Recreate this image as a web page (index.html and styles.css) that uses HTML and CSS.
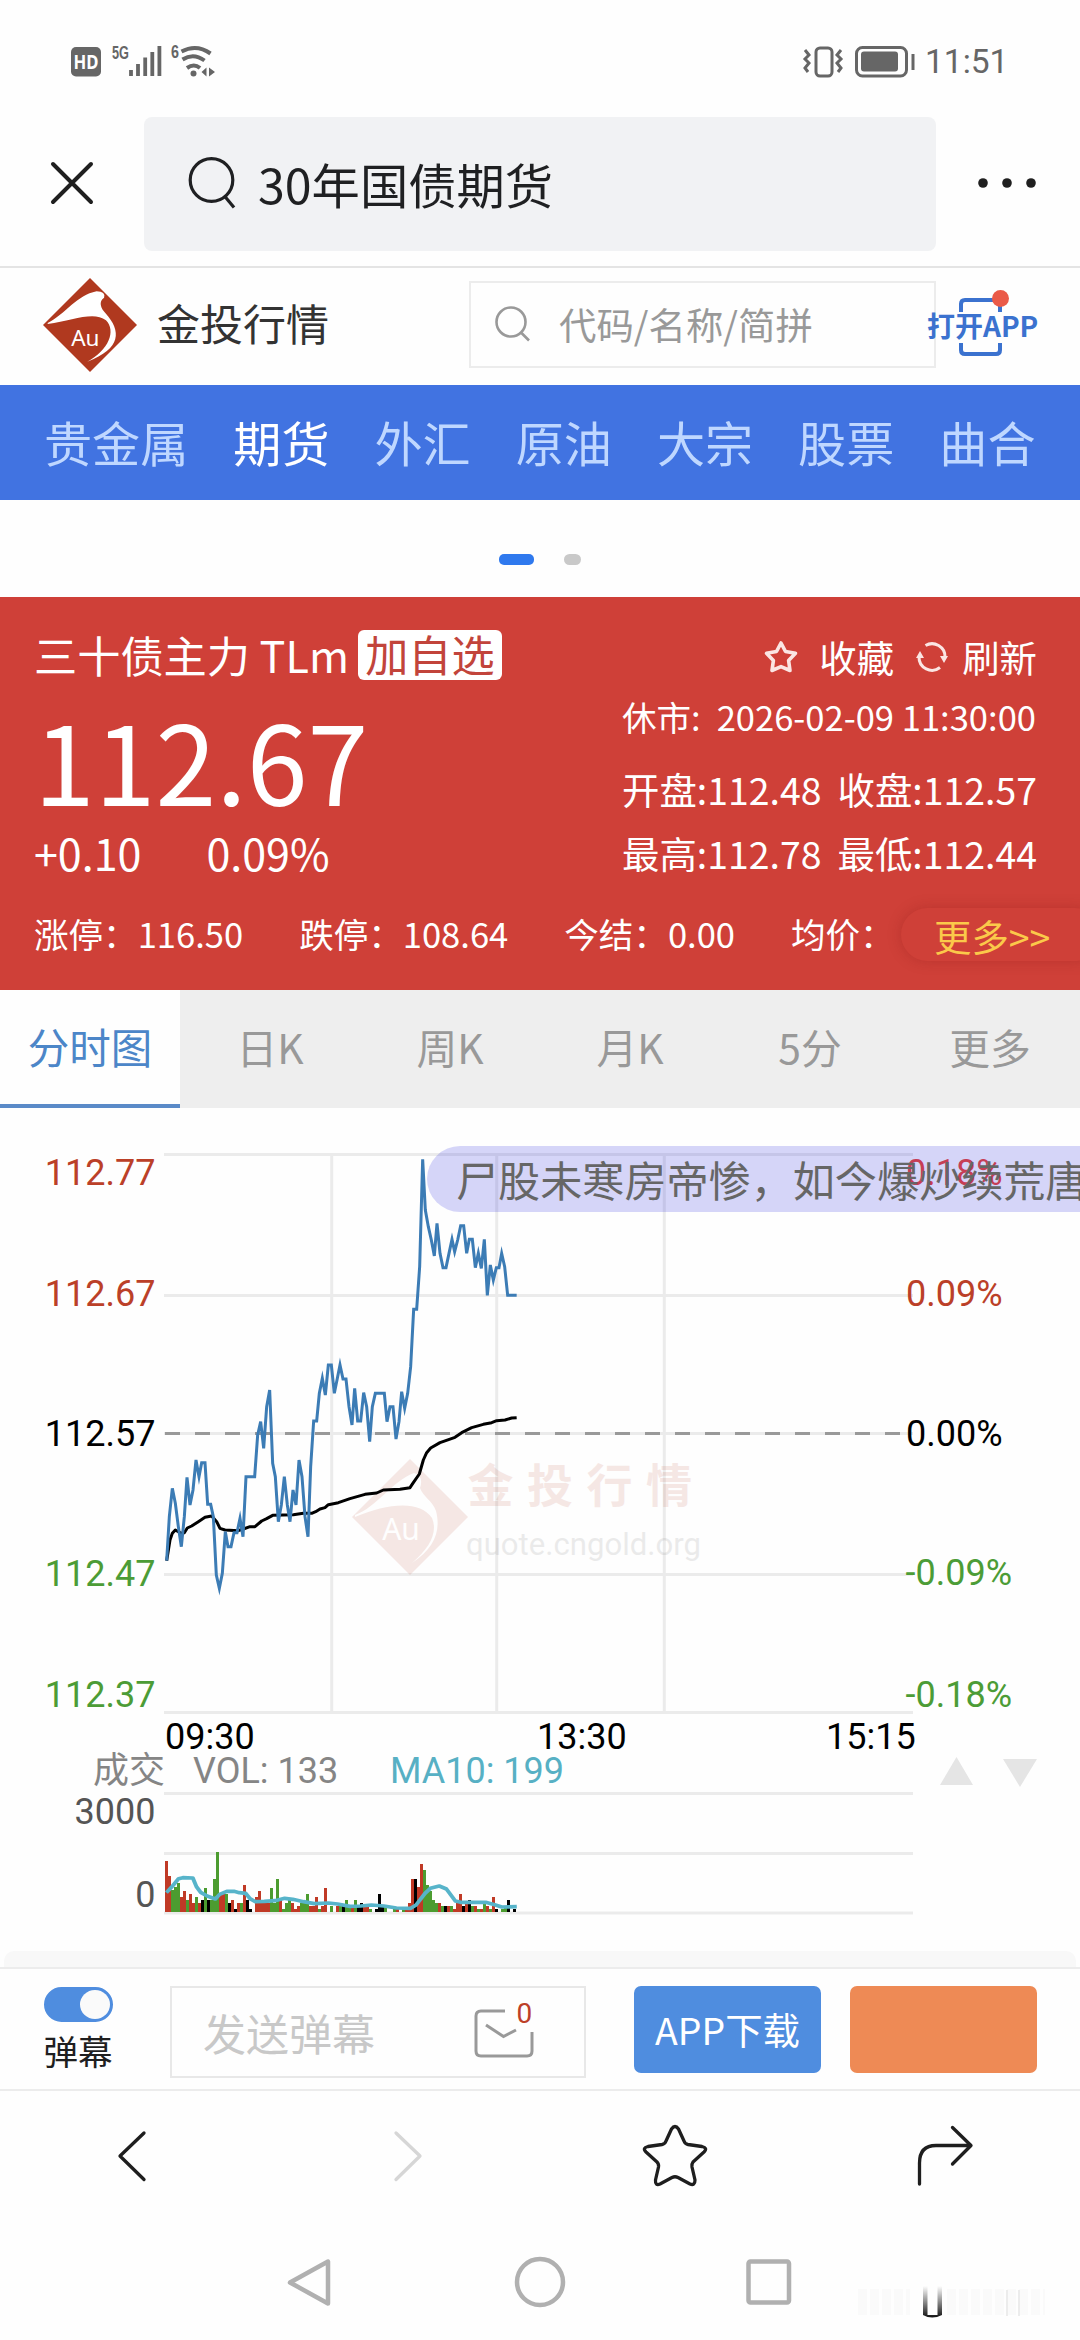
FILE: index.html
```html
<!DOCTYPE html>
<html lang="zh-CN">
<head>
<meta charset="utf-8">
<title>30年国债期货</title>
<link rel="stylesheet" href="styles.css">
</head>
<body>
<header class="status">
  <svg class="status-left" width="146" height="36" viewBox="70 43 146 36">
    <rect x="71" y="47" width="30" height="29.500" rx="5" fill="#666"/>
    <text x="86" y="69" class="hd" text-anchor="middle" textLength="25" lengthAdjust="spacingAndGlyphs">HD</text>
    <text x="112" y="59" class="net" textLength="17" lengthAdjust="spacingAndGlyphs">5G</text>
    <path d="M131 70v6M138 64v12M145.200 57.500v18.500M152.300 52v24M159.400 46v30" stroke="#666" stroke-width="3.800"/>
    <text x="171" y="58" class="net" textLength="8" lengthAdjust="spacingAndGlyphs">6</text>
    <g fill="none" stroke="#666" stroke-width="4">
      <path d="M181.500 51.500q15-8 29 2M182.500 59.500q11-7 22 1M187 68q7-5 13 0"/>
    </g>
    <circle cx="193.500" cy="73.500" r="3" fill="#666"/>
    <path d="M206.500 67.500v9l-5-4.500zM209 67.500v9l6-4.500z" fill="#666"/>
  </svg>
  <svg class="status-right" width="116" height="36" viewBox="802 43 116 36">
    <g fill="none" stroke="#666" stroke-width="3">
      <rect x="816" y="48" width="16" height="28" rx="4"/>
      <path d="M805 50l4 5-4 4 4 4-4 5 3 4M841 50l-4 5 4 4-4 4 4 5-3 4"/>
      <rect x="856.500" y="47.500" width="50" height="28.500" rx="6"/>
      <path d="M913 54v16"/>
    </g>
    <rect x="861" y="51.500" width="37" height="20" rx="3" fill="#666"/>
  </svg>
  <span class="clock">11:51</span>
</header>
<div class="browser-bar">
  <svg class="close" width="46" height="46" viewBox="0 0 46 46"><path d="M4 4L42 42M42 4L4 42" stroke="#1f1f1f" stroke-width="4" stroke-linecap="round"/></svg>
  <div class="query">
    <svg width="48" height="54" viewBox="0 0 48 54" fill="none" stroke="#1f2022" stroke-width="3.200"><circle cx="23.500" cy="24" r="21.300"/><path d="M36.500 40L46 51.500"/></svg>
    <span>30年国债期货</span>
  </div>
  <svg class="dots" width="60" height="12" viewBox="0 0 60 12" fill="#1f1f1f"><circle cx="6" cy="6" r="4.800"/><circle cx="30" cy="6" r="4.800"/><circle cx="54" cy="6" r="4.800"/></svg>
</div>
<div class="site-head">
  <svg class="logo" width="94" height="94" viewBox="0 0 100 100">
    <path d="M50 0L100 50L50 100L0 50z" fill="#b0391f"/>
    <path d="M5 48C24 38 36 18 57 14Q67 14 65 21C59 25 61 32 67 38C83 56 84 75 47 89C70 77 78 56 67 45C54 35 32 45 5 49z" fill="#fff"/>
    <text x="45" y="72" text-anchor="middle" class="au">Au</text>
  </svg>
  <h1>金投行情</h1>
  <div class="code-search">
    <svg width="38" height="40" viewBox="0 0 38 40" fill="none" stroke="#999" stroke-width="2.600"><circle cx="17" cy="17" r="14.500"/><path d="M27.500 28L35 35.500"/></svg>
    <span>代码/名称/简拼</span>
  </div>
  <div class="open-app">
    <svg width="50" height="68" viewBox="0 0 50 68" fill="none" stroke="#3b72cf" stroke-width="4"><path d="M5 22V14Q5 10 9 10H40Q44 10 44 14V22M5 53V60Q5 64 9 64H40Q44 64 44 60V53"/><circle cx="44.500" cy="8.500" r="8.500" fill="#ea5a48" stroke="none"/></svg>
    <b>打开APP</b>
  </div>
</div>
<nav class="cats"><a>贵金属</a><a class="on">期货</a><a>外汇</a><a>原油</a><a>大宗</a><a>股票</a><a>曲合</a></nav>
<div class="pager"><i class="cur"></i><i></i></div>
<section class="quote">
  <div class="quote-main">
    <div class="left">
      <div class="name"><span>三十债主力 TLm</span><span class="add">加自选</span></div>
      <div class="price">112.67</div>
      <div class="chg"><span>+0.10</span><span>0.09%</span></div>
    </div>
    <div class="right">
      <div class="acts">
        <svg class="fav" width="36" height="36" viewBox="0 0 36 36"><path d="M18 4L22.500 12.500L32.500 14.300L25.600 21.500L27 31.500L18 27.600L9 31.500L10.400 21.500L3.500 14.300L13.500 12.500z" fill="none" stroke="#fbe5e3" stroke-width="3.600" stroke-linejoin="round"/></svg>
        <span>收藏</span>
        <svg class="rel" width="32" height="30" viewBox="0 0 32 30"><g fill="none" stroke="#fbe5e3" stroke-width="3"><path d="M9.500 3.500A13 13 0 0 1 29 15M24 25.500A13 13 0 0 1 3 15"/></g><path d="M24 14h8l-4 7zM0 16h8l-4-7z" fill="#fbe5e3"/></svg>
        <span>刷新</span>
      </div>
      <div class="time"><span>休市:</span><span>2026-02-09 11:30:00</span></div>
      <div class="pair p1"><span>开盘:112.48</span><span>收盘:112.57</span></div>
      <div class="pair"><span>最高:112.78</span><span>最低:112.44</span></div>
    </div>
  </div>
  <div class="extra"><span>涨停：116.50</span><span>跌停：108.64</span><span>今结：0.00</span><span>均价：</span><a class="more">更多&gt;&gt;</a></div>
</section>
<nav class="tabs"><a class="on">分时图</a><a>日K</a><a>周K</a><a>月K</a><a>5分</a><a>更多</a></nav>
<section class="chart">
  <svg width="1080" height="843" viewBox="0 1108 1080 843">
    <path class="grid" d="M164 1154.500H913M164 1295.500H913M164 1433.500H913M164 1574.500H913M164 1712.500H913M331.700 1154V1712M496.700 1154V1712M664.300 1154V1712M164 1793.500H913M164 1853.500H913M164 1913H913"/>
    <g class="mark">
      <path fill="#b4371c" d="M410 1459L468 1517L410 1575L352 1517z"/>
      <path fill="#fff" d="M355 1515C377 1507 391 1482 414 1473Q424 1476 420 1488C424 1498 432 1500 436 1511C441 1530 435 1548 412 1563C430 1548 438 1532 432 1518C420 1500 388 1503 355 1517z"/>
      <text x="401" y="1540" text-anchor="middle" class="mark-au">Au</text>
      <text x="467.500" y="1502" class="mark-cn">金投行情</text>
      <text x="466" y="1555" class="mark-en" textLength="235" lengthAdjust="spacingAndGlyphs">quote.cngold.org</text>
    </g>
    <path class="base" d="M165 1433.500H906"/>
    <g transform="translate(150 1140) scale(.33333)" fill="none">
      <polyline class="avg" points="50,1262 60,1200 67,1180 76,1170 94,1180 103,1178 112,1164 125,1158 145,1145 165,1132 185,1128 200,1145 210,1165 225,1170 265,1172 280,1167 300,1160 315,1160 335,1143 350,1136 368,1126 430,1124 460,1120 485,1120 497,1115 510,1107 525,1103 535,1094 565,1088 600,1076 645,1063 680,1059 700,1050 750,1048 780,1043 790,1028 808,1002 820,960 830,938 842,924 870,908 915,892 935,878 965,863 1000,853 1025,848 1040,842 1065,840 1085,834 1100,833"/>
      <polyline class="line" points="50,1262 58,1130 67,1045 76,1090 85,1160 94,1220 103,1130 111,1012 120,1095 129,1050 138,960 147,1010 155,968 165,968 173,1093 182,1093 190,1130 199,1305 208,1345 217,1300 226,1175 234,1220 243,1220 252,1178 261,1178 270,1135 279,1190 288,1010 314,1010 323,885 332,845 341,925 350,800 359,750 368,970 376,1010 385,1145 394,1095 403,1010 412,1095 420,1145 429,1050 438,1095 447,960 456,1010 465,1130 474,1190 482,980 491,843 500,843 508,760 517,715 526,765 535,675 544,675 553,760 561,720 570,675 579,717 588,717 597,800 606,855 614,745 623,843 632,843 641,758 650,800 659,905 667,800 676,760 703,760 711,845 720,800 729,800 738,897 747,845 755,755 764,805 773,760 782,680 791,508 800,508 809,380 818,58 826,210 835,260 844,300 853,348 861,250 870,340 879,383 888,383 897,340 906,298 914,335 923,300 932,257 941,257 950,340 958,298 967,298 976,383 985,340 994,385 1003,298 1012,466 1021,375 1030,420 1039,383 1047,383 1055,340 1064,380 1073,466 1100,466"/>
    </g>
    <g id="volume"></g>
    <polyline class="ma" transform="translate(0 1700) scale(.35714 .33333)" points="466,578 480,562 500,536 512,533 540,534 550,560 562,577 580,588 603,597 615,583 635,574 655,574 670,578 688,580 700,596 715,605 740,604 770,602 797,595 820,598 850,605 880,611 920,609 945,612 980,619 1010,618 1040,615 1075,618 1110,624 1150,625 1165,615 1190,580 1205,565 1230,558 1250,567 1275,603 1290,607 1360,607 1385,614 1405,621 1447,620"/>
    <g class="lab" text-anchor="end">
      <text x="155.500" y="1184.500" class="up">112.77</text><text x="155.500" y="1306" class="up">112.67</text><text x="155.500" y="1446">112.57</text><text x="155.500" y="1585.500" class="down">112.47</text><text x="155.500" y="1706.500" class="down">112.37</text>
      <text x="155.500" y="1824" class="dim">3000</text><text x="155.500" y="1907" class="dim">0</text>
    </g>
    <g class="lab">
      <text x="906" y="1184.500" class="top">0.18%</text><text x="906" y="1306" class="up">0.09%</text><text x="906" y="1446">0.00%</text><text x="905.500" y="1585" class="down">-0.09%</text><text x="905.500" y="1706.500" class="down">-0.18%</text>
      <text x="165" y="1749">09:30</text><text x="537" y="1749">13:30</text><text x="826" y="1749">15:15</text>
      <text x="93" y="1783" class="vol">成交</text><text x="193" y="1782.500" class="vol">VOL: 133</text><text x="390" y="1782.500" class="ma10">MA10: 199</text>
    </g>
    <path fill="#e5e5e5" d="M940 1785L956.500 1757L973 1785zM1003 1759H1037L1020 1787z"/>
  </svg>
  <div class="danmaku">尸股未寒房帝惨，如今爆炒续荒唐</div>
</section>
<div class="sheet"></div>
<div class="tools">
  <div class="switch"><i></i><span>弹幕</span></div>
  <div class="send"><span>发送弹幕</span>
    <svg width="64" height="64" viewBox="0 0 64 64"><path d="M36 13H12Q7 13 7 18V53Q7 58 12 58H58Q63 58 63 53V34" fill="none" stroke="#999" stroke-width="3"/><path d="M17 27L34.500 38.500L47 32" fill="none" stroke="#999" stroke-width="3"/><text x="47.500" y="24.500" class="cnt">0</text></svg>
  </div>
  <a class="btn">APP下载</a><a class="btn alt"></a>
</div>
<nav class="browser-nav">
  <svg width="1080" height="139" viewBox="0 2091 1080 139" fill="none" stroke="#1e1e1e" stroke-width="3.300" stroke-linecap="round" stroke-linejoin="round">
    <path d="M144 2133L120 2156L144 2179.500"/>
    <path d="M396 2133L420 2156L396 2179.500" stroke="#d6d6d6"/>
    <path d="M671.500 2129Q675 2124 678.500 2129L684 2141Q685 2144 688 2144.500L702 2146.500Q708 2148 704 2152L693 2162Q691.500 2164 692 2167L695 2180Q695 2186 690 2184L678 2177.500Q675 2176 672 2177.500L660 2184Q655 2186 655.500 2180L658.500 2167Q659 2164 657 2162L646 2152Q642 2148 648 2146.500L662 2144.500Q665 2144 666 2141z"/>
    <path d="M919.500 2184V2163Q919.500 2145.500 936 2145.500H971M952.500 2127.500L971 2145.500L952.500 2164"/>
  </svg>
</nav>
<nav class="system-nav">
  <svg width="1080" height="110" viewBox="0 2230 1080 110" fill="none" stroke="#b0b0b0" stroke-width="4.500" stroke-linejoin="round">
    <path d="M328 2261.500V2303.500L290 2282.500z"/><circle cx="540" cy="2282" r="23"/><rect x="748.500" y="2261.500" width="40.500" height="41" rx="2"/>
    <defs><linearGradient id="fade" x1="0" y1="0" x2="0" y2="1"><stop offset="0" stop-color="#222" stop-opacity="0"/><stop offset="1" stop-color="#111"/></linearGradient></defs>
    <path d="M923 2286V2315Q932 2320 942 2315V2286H937.500V2315H927.500V2286z" fill="url(#fade)" stroke="none"/>
    <path d="M858 2302h52M947 2302h98" stroke="#fafafa" stroke-width="26" stroke-dasharray="9 3"/>
    <path d="M1007 2290v26M1019 2290v26" stroke="#ececec" stroke-width="2"/>
  </svg>
</nav>
<script src="script.js"></script>
</body>
</html>
```
FILE: styles.css
```css
* { box-sizing: border-box; }
body { margin: 0; width: 1080px; height: 2340px; overflow: hidden; background: #fefefe; font-family: "Noto Sans CJK SC", sans-serif; color: #333; display: flex; flex-direction: column; }
body > * { flex: none; }
svg { display: block; flex: none; overflow: visible; }
span, a, h1, b { white-space: nowrap; }
.status { height: 117px; padding: 43px 72px 0 70px; display: flex; align-items: flex-start; }
.status-right { margin-left: auto; }
.clock { margin-left: 7px; font: 33.500px/38px Roboto, sans-serif; color: #666; width: 83px; }
.hd { font: 700 20px "Noto Sans", sans-serif; fill: #fff; }
.net { font: 700 19px "Liberation Sans", sans-serif; fill: #666; }
.browser-bar { height: 151px; border-bottom: 2px solid #e4e4e4; display: flex; align-items: flex-start; padding-left: 49px; }
.close { margin-top: 43px; }
.query { margin-left: 49px; width: 792px; height: 134px; border-radius: 8px; background: #f1f2f4; display: flex; align-items: center; padding-left: 44px; }
.query svg { margin-top: -3px; }
.query span { margin: -2px 0 0 22px; font-size: 48.300px; color: #1f2022; line-height: 60px; }
.dots { margin: 60px 0 0 41px; }
.site-head { height: 117px; padding: 10px 42px 0 43px; display: flex; }
.au { font: 24px "Noto Sans", sans-serif; fill: #fff; }
h1 { margin: 14px 0 0 20px; font-size: 43px; font-weight: 400; line-height: 60px; width: 174px; }
.code-search { margin: 3px 0 0 138px; width: 467px; height: 87px; border: 2.500px solid #ececec; display: flex; align-items: center; padding-left: 23px; color: #999; font-size: 37.440px; line-height: 60px; }
.code-search span { margin: -1px 0 0 27px; }
.open-app { position: relative; width: 110px; margin-left: -9px; margin-top: 12px; display: flex; justify-content: center; }
.open-app svg { margin-left: -3px; }
.open-app b { position: absolute; left: 0; top: 15px; font-size: 28px; line-height: 40px; color: #3b72cf; }
.cats { height: 115px; background: #4173e1; display: flex; gap: 45px; padding-left: 44px; font-size: 48.100px; line-height: 113px; color: #bfd7ff; }
.cats .on { color: #fff; }
.pager { height: 97px; display: flex; justify-content: center; gap: 30px; padding-top: 54px; }
.pager i { width: 17px; height: 11px; border-radius: 6px; background: #c9c9c9; }
.pager .cur { width: 35px; background: #2f79ee; border-radius: 5px; }
.quote { height: 393px; background: #cf4038; color: #fff; overflow: hidden; }
.quote-main { display: flex; justify-content: space-between; height: 291px; padding: 0 43px 0 34px; }
.name { display: flex; margin-top: 33px; font-size: 43.200px; line-height: 49px; }
.add { margin-left: 9px; width: 144px; height: 50px; line-height: 47px; background: #fff; color: #c2443b; border-radius: 6px; text-align: center; }
.price { font-size: 109.500px; line-height: 120px; margin-top: 19px; }
.chg { display: flex; gap: 65px; font-size: 43px; line-height: 60px; margin-top: 3px; }
.right { display: flex; flex-direction: column; }
.acts { display: flex; justify-content: flex-end; align-items: center; font-size: 37.440px; line-height: 50px; margin-top: 35px; }
.fav { margin-right: 20px; }
.rel { margin: 0 14px 0 22px; }
.time { display: flex; justify-content: space-between; font-size: 34.560px; line-height: 50px; margin-top: 9px; width: 414px; }
.pair { display: flex; gap: 16px; justify-content: flex-end; font-size: 37.440px; line-height: 64px; }
.p1 { margin-top: 16px; }
.extra { position: relative; display: flex; gap: 56px; padding-left: 34px; font-size: 34.560px; line-height: 90px; }
.more { position: absolute; left: 901px; top: 20px; width: 200px; height: 53px; border-radius: 27px; line-height: 56px; padding-left: 33px; background: #cf4038; box-shadow: 0 0 14px rgba(130, 20, 20, .28); color: #fbc94a; font-size: 37.440px; }
.tabs { display: grid; grid-template-columns: repeat(6, 1fr); height: 118px; background: #eee; color: #999; text-align: center; font-size: 40.800px; line-height: 113px; }
.tabs .on { background: #fefefe; color: #4c86c8; border-bottom: 4px solid #5a8ac8; font-size: 41.500px; }
.chart { position: relative; height: 843px; overflow: hidden; }
.grid { stroke: #ebebeb; stroke-width: 3; }
.base { stroke: #999; stroke-width: 3; stroke-dasharray: 15 15; }
.avg { stroke: #000; stroke-width: 9; stroke-linejoin: round; }
.line { stroke: #3c7cb5; stroke-width: 9; stroke-miterlimit: 6; }
.ma { fill: none; stroke: #57b4ca; stroke-width: 11; stroke-linejoin: round; }
.mark { opacity: .11; }
.mark-au { font: 30px "Noto Sans", sans-serif; fill: #fff; }
.mark-cn { font: 700 46px "Noto Sans CJK SC", sans-serif; letter-spacing: 13.500px; fill: #b4371c; }
.mark-en { font: 31px Roboto, sans-serif; fill: #555; }
.lab { font: 36px Roboto, "Noto Sans CJK SC", sans-serif; fill: #000; }
.up { fill: #bb4028; }
.top { fill: #ec4a3c; }
.down { fill: #4c9c36; }
.dim { fill: #555; }
.vol { fill: #858585; }
.ma10 { fill: #57b0c4; }
.danmaku { position: absolute; left: 427px; top: 38px; height: 66px; width: 720px; border-radius: 33px; background: rgba(0, 0, 220, .16); color: #666; white-space: nowrap; font-size: 42.100px; line-height: 66px; padding-left: 29px; }
.sheet { height: 16px; margin: 0 4px; background: #f8f8f8; border-radius: 10px 10px 0 0; }
.tools { height: 124px; border-top: 2px solid #ececec; border-bottom: 2px solid #ececec; display: flex; padding: 17px 43px 0; }
.switch { width: 70px; margin-right: 57px; display: flex; flex-direction: column; align-items: center; }
.switch i { width: 69px; height: 35px; margin-top: 1px; border-radius: 18px; background: #4f8ddf; border: 3px solid #4f8ddf; display: flex; justify-content: flex-end; }
.switch i::after { content: ""; width: 30px; height: 29px; border-radius: 50%; background: #fafafa; }
.switch span { margin-top: 3px; font-size: 34.560px; line-height: 50px; color: #1f1f1f; }
.send { width: 416px; height: 92px; border: 2.500px solid #e8e8e8; padding: 0 51px 0 31px; display: flex; justify-content: space-between; color: #c8c8c8; font-size: 43px; line-height: 88px; }
.send svg { margin-top: 10px; }
.cnt { font: 28px Roboto, sans-serif; fill: #bd4028; }
.btn { margin-left: 48px; width: 187px; height: 87px; border-radius: 7px; background: #4f8ddf; color: #fff; text-align: center; font-size: 37.440px; line-height: 86px; }
.alt { margin-left: 29px; background: #ee8a55; }
.browser-nav { height: 139px; }
.system-nav { height: 110px; }
```
FILE: script.js
```js
// One bar per minute: colour code (r, g, k) and height in pixels, 0 leaves the minute empty.
const bars = "r51 r36 g22 g25 g29 r15 r21 g12 r18 r9 g15 r9 k12 g24 k12 g12 g33 g60 r18 r18 g18 k9 r12 k3 r9 g9 r27 k12 k3 r0 r15 r21 r12 r9 r9 g24 g9 g33 r12 g3 g9 g12 r9 r3 r6 g9 g9 g18 r6 r6 r15 g3 r6 r24 g0 g6 g0 r6 g6 k6 g12 g6 r6 g12 k6 k9 r6 r6 g3 g0 k3 k18 k6 g6 g0 g0 g3 r3 g0 g3 r3 r9 r33 k33 r25 r48 g42 g27 g21 g12 g9 r9 g6 k6 r6 g6 r3 r9 r18 k6 r9 k12 g6 r6 g3 r3 g9 r6 g3 r15 k3 g0 g3 g6 k12 g0 k3";
const colors = { r: "#c03a26", g: "#4c9c30", k: "#000" };
const group = document.getElementById("volume");
bars.split(" ").forEach((bar, i) => {
  const h = Number(bar.slice(1));
  if (!h) return;
  const rect = document.createElementNS("http://www.w3.org/2000/svg", "rect");
  rect.setAttribute("x", 165 + i * 3);
  rect.setAttribute("y", 1912 - h);
  rect.setAttribute("width", 3);
  rect.setAttribute("height", h);
  rect.setAttribute("fill", colors[bar[0]]);
  group.append(rect);
});
```
